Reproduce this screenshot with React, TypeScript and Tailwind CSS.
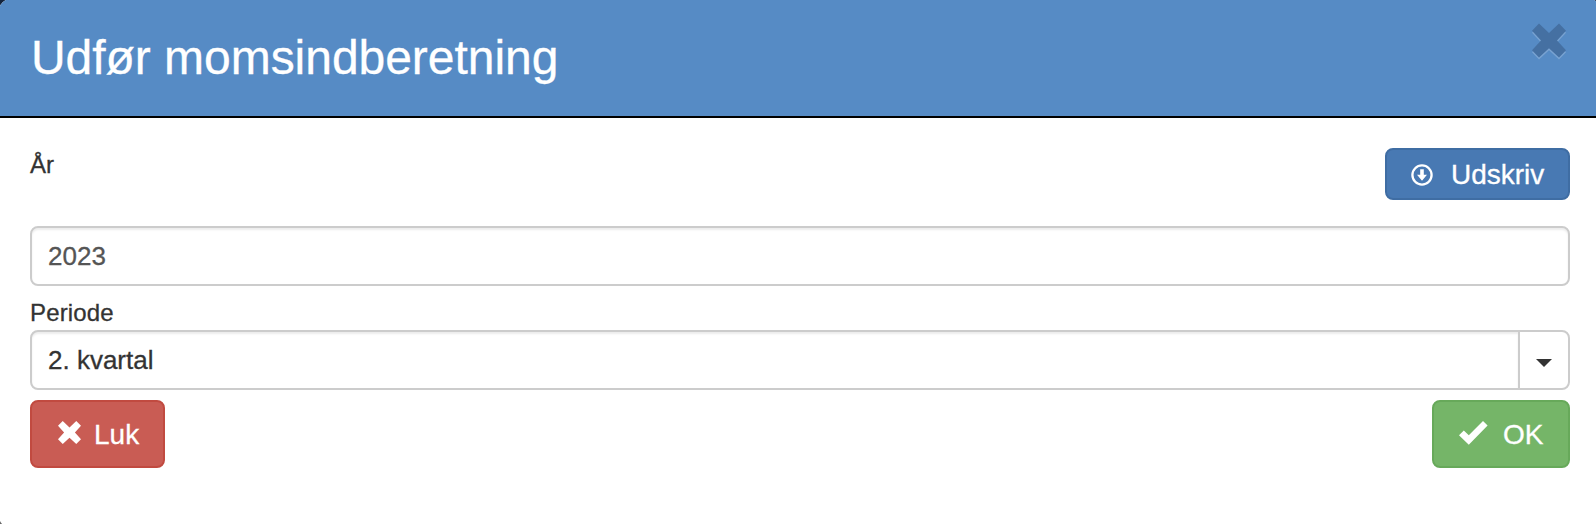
import React from 'react';

function Glyph({ name, className }: { name: 'remove' | 'ok' | 'down'; className: string }) {
  if (name === 'remove') {
    return (
      <svg viewBox="0 0 34 34" className={className} fill="currentColor">
        <path d="M7 0 17 9.5 27 0 34 7.2 25 17 34 26.8 27 34 17 24.8 7 34 0 26.8 9 17 0 7.2Z" />
      </svg>
    );
  }
  if (name === 'ok') {
    return (
      <svg viewBox="0 0 29 24" className={className} fill="currentColor">
        <path d="M0 14.3 4.8 9.5 9.8 14.2 24 0 28.6 4.6 9.8 23.7Z" />
      </svg>
    );
  }
  return (
    <svg viewBox="0 0 22 22" className={className} fill="currentColor">
      <circle cx="11" cy="11" r="9.6" fill="none" stroke="currentColor" strokeWidth="2.3" />
      <path d="M9.2 5.2H12.8V10.8H16L11 16.8 6 10.8H9.2Z" />
    </svg>
  );
}

export default function App() {
  return (
    <div className="h-[524px] w-[1596px] overflow-hidden bg-linear-to-b from-[#14243c] from-50% to-[#666666] to-50% font-['Liberation_Sans',Arial,sans-serif] text-[#333333] [-webkit-text-stroke:0.3px]">
      <div className="-mt-px -ml-px flex h-[529px] w-[1602px] flex-col overflow-hidden rounded-[12px] bg-white">
        <header className="flex h-[119px] shrink-0 items-start justify-between border-b-2 border-black bg-[#568bc5] pt-px pr-[35px] pl-[32px] text-white">
          <h1 className="pt-[30px] text-[48px] leading-[56px] tracking-[-0.04px]">Udfør momsindberetning</h1>
          <button aria-label="Luk" className="pt-[23px] text-[#4570a2]">
            <Glyph name="remove" className="h-[35px] w-[34px] drop-shadow-[0_2px_0_#78a2d1]" />
          </button>
        </header>
        <main className="flex flex-col pt-[30px] pr-[31px] pl-[31px]">
          <div className="flex h-[78px] items-start justify-between">
            <label className="text-[24px] leading-[33px]">År</label>
            <button className="flex h-[52px] w-[185px] items-center rounded-[8px] border-2 border-[#3f6da3] bg-[#4879b3] pl-[24px] text-[28px] text-white">
              <Glyph name="down" className="mt-[2px] mr-[18px] h-[22px] w-[22px]" />
              <span className="pt-[2px] leading-[36px]">Udskriv</span>
            </button>
          </div>
          <div className="flex h-[60px] items-center rounded-[8px] border-2 border-[#cccccc] px-[16px] text-[26px] text-[#555555] shadow-[inset_0_2px_2px_rgba(0,0,0,0.075)]">
            2023
          </div>
          <label className="flex h-[44px] items-end text-[24px] leading-[34px] tracking-[0.15px]">Periode</label>
          <div className="flex h-[60px] rounded-[8px] border-2 border-[#cccccc]">
            <div className="flex flex-1 items-center rounded-l-[6px] px-[16px] text-[26px] shadow-[inset_0_2px_2px_rgba(0,0,0,0.075)]">
              2. kvartal
            </div>
            <div className="flex w-[50px] items-center justify-center border-l-2 border-[#cccccc]">
              <svg viewBox="0 0 16 8" className="mt-[5px] h-[8px] w-[16px]" fill="#333333">
                <path d="M0 0H16L8 8Z" />
              </svg>
            </div>
          </div>
          <div className="mt-[10px] flex justify-between text-[28px] text-white">
            <button className="flex h-[68px] w-[135px] items-center rounded-[8px] border-2 border-[#c14a40] bg-[#c95c54] pl-[26px]">
              <Glyph name="remove" className="mt-[-4px] mr-[13px] h-[23px] w-[23px]" />
              <span className="pt-px">Luk</span>
            </button>
            <button className="flex h-[68px] w-[138px] items-center rounded-[8px] border-2 border-[#67a95a] bg-[#75b568] pl-[25px]">
              <Glyph name="ok" className="mt-[-3px] mr-[15px] h-[24px] w-[29px]" />
              <span className="pt-px">OK</span>
            </button>
          </div>
        </main>
      </div>
    </div>
  );
}
